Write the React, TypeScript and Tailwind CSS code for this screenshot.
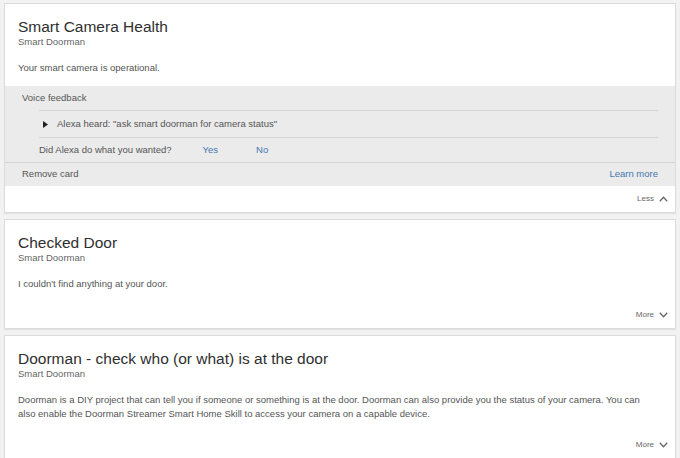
import type { ReactNode } from 'react'

type CardProps = {
  title: string
  body: string
  footer: 'Less' | 'More'
  children?: ReactNode
}

function Chevron({ up }: { up: boolean }) {
  return (
    <svg width="9" height="6" viewBox="0 0 9 6" className="ml-[5px]" aria-hidden="true">
      <path
        d={up ? 'M0.8 5.2 L4.5 1.3 L8.2 5.2' : 'M0.8 0.8 L4.5 4.7 L8.2 0.8'}
        fill="none"
        stroke="#666"
        strokeWidth="1.3"
      />
    </svg>
  )
}

function Card({ title, body, footer, children }: CardProps) {
  return (
    <section className="border border-[#dcdcdc] bg-white shadow-[0_1px_1px_rgba(0,0,0,0.06)]">
      <div className="pl-[13px] pr-[18px] pt-[14px] pb-[11px]">
        <h2 className="text-[15.5px] leading-[18px] text-[#2f2f2f]">{title}</h2>
        <p className="text-[9.5px] leading-[12px] text-[#666]">Smart Doorman</p>
        <p className="mt-[13px] text-[9.5px] leading-[14px] text-[#555]">{body}</p>
      </div>
      {children}
      <div className="flex h-[26px] items-center justify-end pr-[7px] text-[8px] text-[#666]">
        {footer}
        <Chevron up={footer === 'Less'} />
      </div>
    </section>
  )
}

function VoiceFeedback() {
  return (
    <div className="bg-[#ebebeb] text-[9.5px] text-[#555]">
      <div className="flex h-[24px] items-center pl-[17px]">Voice feedback</div>
      <div className="ml-[34px] mr-[17px] border-t border-[#d5d5d5]">
        <div className="flex h-[27px] items-center border-b border-[#d5d5d5] pl-[4px]">
          <svg width="5" height="7" viewBox="0 0 5 7" aria-hidden="true">
            <path d="M0 0 L5 3.5 L0 7 Z" fill="#222" />
          </svg>
          <span className="ml-[9px]">Alexa heard: "ask smart doorman for camera status"</span>
        </div>
        <div className="flex h-[24px] items-center">
          <span>Did Alexa do what you wanted?</span>
          <span className="ml-[31px] text-[#4577b0]">Yes</span>
          <span className="ml-[38px] text-[#4577b0]">No</span>
        </div>
      </div>
      <div className="flex h-[24px] items-center justify-between border-t border-[#d5d5d5] pl-[17px] pr-[17px]">
        <span>Remove card</span>
        <span className="text-[#4577b0]">Learn more</span>
      </div>
    </div>
  )
}

export default function App() {
  return (
    <main
      className="flex min-h-[458px] flex-col gap-[6px] bg-[#f2f2f2] px-[4px] pt-[3px]"
      style={{ fontFamily: '"Liberation Sans", Arial, sans-serif' }}
    >
      <Card title="Smart Camera Health" body="Your smart camera is operational." footer="Less">
        <VoiceFeedback />
      </Card>
      <Card title="Checked Door" body="I couldn't find anything at your door." footer="More" />
      <Card
        title="Doorman - check who (or what) is at the door"
        body="Doorman is a DIY project that can tell you if someone or something is at the door. Doorman can also provide you the status of your camera. You can also enable the Doorman Streamer Smart Home Skill to access your camera on a capable device."
        footer="More"
      />
    </main>
  )
}
